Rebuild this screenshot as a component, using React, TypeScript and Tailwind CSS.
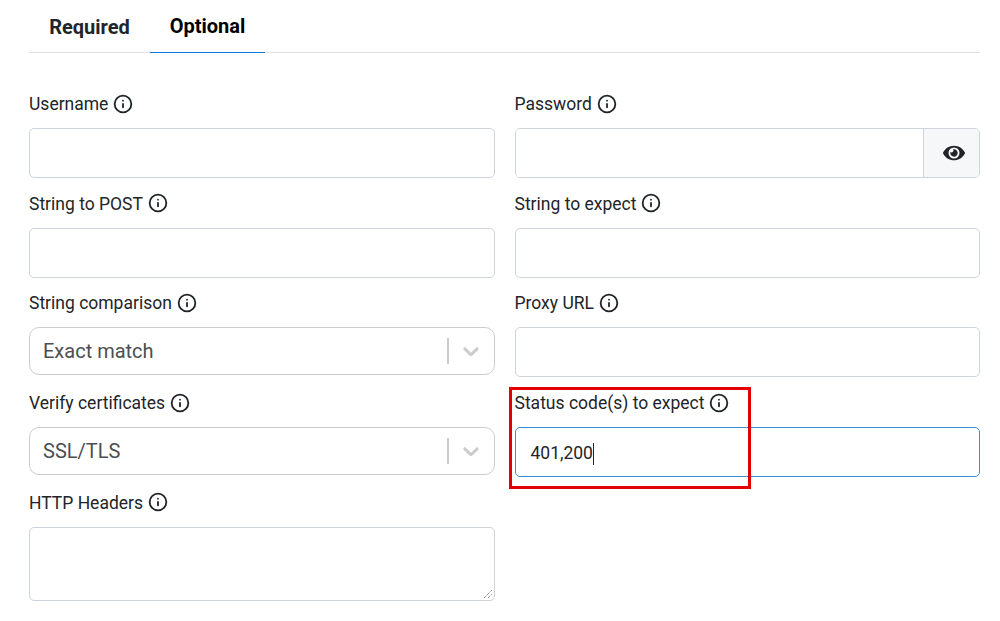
import React from 'react';
import { Info } from 'lucide-react';
import { FaEye } from 'react-icons/fa';

const Label: React.FC<{ text: string }> = ({ text }) => (
  <label className="flex items-center gap-[5px] h-[24px] text-[17.5px] text-[#212529] leading-[24px]">
    {text}
    <Info size={20} strokeWidth={2.2} className="text-[#212529] -mt-px" />
  </label>
);

const inputClass =
  'block w-full h-[50px] shrink-0 border border-[#ced4da] rounded-[5px] bg-white px-[15px] text-[17.5px] text-[#212529] outline-none';

const Chevron = () => (
  <svg viewBox="0 0 20 20" width="26" height="26" fill="#cccccc">
    <path d="M4.516 7.548c0.436-0.446 1.043-0.481 1.576 0l3.908 3.747 3.908-3.747c0.533-0.481 1.141-0.446 1.574 0 0.436 0.445 0.408 1.197 0 1.615-0.406 0.418-4.695 4.502-4.695 4.502-0.217 0.223-0.502 0.335-0.787 0.335s-0.57-0.112-0.789-0.335c0 0-4.287-4.084-4.695-4.502s-0.436-1.17 0-1.615z" />
  </svg>
);

const SelectBox: React.FC<{ value: string }> = ({ value }) => (
  <div className="flex items-center h-[48px] shrink-0 border border-[#cccccc] rounded-[10px] bg-white pl-[13px] pr-[10px]">
    <span className="flex-1 text-[20px] text-[#4a4f54]">{value}</span>
    <span className="w-[2px] h-[26px] bg-[#cccccc] mr-[9px]" />
    <Chevron />
  </div>
);

const Field: React.FC<{ label: string; children: React.ReactNode }> = ({ label, children }) => (
  <div className="flex flex-col gap-[12px]">
    <Label text={label} />
    {children}
  </div>
);

export default function App() {
  return (
    <div className="w-[1000px] h-[621px] bg-white overflow-hidden px-[29px] pr-[20px] font-['Roboto',sans-serif]">
      <div className="flex h-[53px] border-b border-[#dee2e6]">
        <button className="w-[121px] h-[53px] text-[20px] font-bold text-[#212529]">Required</button>
        <button className="w-[115px] h-[53px] text-[20px] font-bold text-black border-b border-[#0b76d8]">Optional</button>
      </div>

      <div className="grid grid-cols-2 gap-x-[20px] auto-rows-[99.7px] pt-[39px]">
        <Field label="Username">
          <input className={inputClass} />
        </Field>
        <Field label="Password">
          <div className="flex h-[50px] shrink-0 border border-[#ced4da] rounded-[5px] overflow-hidden">
            <div className="flex-1 bg-white" />
            <div className="w-[56px] flex items-center justify-center pl-[5px] bg-[#f6f7f9] border-l border-[#ced4da]">
              <FaEye size={22} className="text-[#212529]" />
            </div>
          </div>
        </Field>
        <Field label="String to POST">
          <input className={inputClass} />
        </Field>
        <Field label="String to expect">
          <input className={inputClass} />
        </Field>
        <Field label="String comparison">
          <SelectBox value="Exact match" />
        </Field>
        <Field label="Proxy URL">
          <input className={inputClass} />
        </Field>
        <Field label="Verify certificates">
          <SelectBox value="SSL/TLS" />
        </Field>
        <div className="relative">
          <Field label="Status code(s) to expect">
            <div className="flex items-center h-[50px] shrink-0 border border-[#3b8fd9] rounded-[5px] bg-white px-[15px] pt-[3px] text-[17.5px] text-[#212529]">
              401,200
              <span className="w-px h-[22px] bg-[#212529]" />
            </div>
          </Field>
          <div className="absolute left-[-5.5px] top-[-4px] w-[242px] h-[102px] border-[3px] border-[#e30000]" />
        </div>
        <Field label="HTTP Headers">
          <div className="relative h-[74px] shrink-0 border border-[#ced4da] rounded-[5px] bg-white">
            <svg viewBox="0 0 10 10" width="10" height="10" className="absolute right-[1px] bottom-[1px]" stroke="#555555" strokeWidth="1" strokeDasharray="1 1">
              <path d="M1 9 L9 1 M5 9 L9 5" />
            </svg>
          </div>
        </Field>
      </div>
    </div>
  );
}
